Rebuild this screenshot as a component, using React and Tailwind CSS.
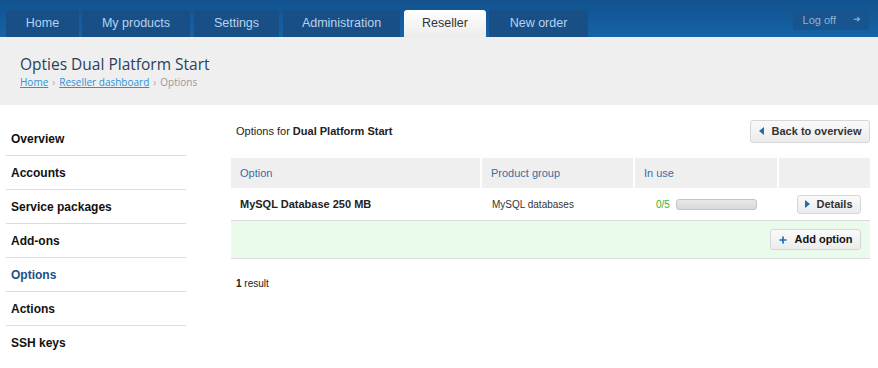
import { Plus } from 'lucide-react';

const tabs = [
  { label: 'Home', cls: 'w-[73px]' },
  { label: 'My products', cls: 'w-[108px] ml-[3px]' },
  { label: 'Settings', cls: 'w-[85px] ml-[4px]' },
  { label: 'Administration', cls: 'w-[117px] ml-[4px]' },
  { label: 'Reseller', cls: 'w-[82px] ml-[4px]', active: true },
  { label: 'New order', cls: 'w-[99px] ml-[3px]' },
];

const menu = ['Overview', 'Accounts', 'Service packages', 'Add-ons', 'Options', 'Actions', 'SSH keys'];

function Caret({ dir = 'right' }) {
  return (
    <svg width="5" height="8" viewBox="0 0 5 8" className="shrink-0">
      {dir === 'right' ? <path d="M0 0 L5 4 L0 8 Z" fill="#1a6fb5" /> : <path d="M5 0 L0 4 L5 8 Z" fill="#1a6fb5" />}
    </svg>
  );
}

export default function App() {
  return (
    <div className="w-[878px] h-[368px] bg-white overflow-hidden font-['Liberation_Sans',Arial,sans-serif] text-[11px] text-[#222]">
      {/* top nav */}
      <div className="h-[37px] bg-gradient-to-b from-[#12528f] to-[#1663a6] flex items-end pl-[6px] pr-[9px]">
        <div className="flex">
          {tabs.map((t) => (
            <div
              key={t.label}
              className={`${t.cls} h-[27px] rounded-t-[3px] flex items-center justify-center text-[12.5px] ${
                t.active ? 'bg-gradient-to-b from-white to-[#ececec] text-[#333]' : 'bg-[#174f86] text-[#b9d3ee]'
              }`}
            >
              {t.label}
            </div>
          ))}
        </div>
        <div className="ml-auto mb-[7px] w-[76px] h-[20px] rounded-[3px] bg-[#18548d] flex items-center justify-end pr-[8px] gap-[17px] text-[11px] text-[#8fb3d9]">
          <span>Log off</span>
          <span className="text-[9px]">➜</span>
        </div>
      </div>

      {/* page header */}
      <div className="h-[68px] bg-[#efefef] pl-[20px] pt-[16px]">
        <div className="font-['Open_Sans',sans-serif] text-[15.5px] leading-[22px] text-[#2a3f5a]">Opties Dual Platform Start</div>
        <div className="flex items-center gap-[4px] text-[10px] font-['Open_Sans',sans-serif]">
          <span className="text-[#2b93d6] underline">Home</span>
          <span className="text-[#aaa]">›</span>
          <span className="text-[#2b93d6] underline">Reseller dashboard</span>
          <span className="text-[#aaa]">›</span>
          <span className="text-[#999]">Options</span>
        </div>
      </div>

      <div className="flex pt-[17px]">
        {/* sidebar */}
        <div className="w-[180px] ml-[6px] shrink-0">
          {menu.map((m, i) => (
            <div
              key={m}
              className={`h-[34px] flex items-center pl-[5px] font-bold text-[12px] ${
                i < menu.length - 1 ? 'border-b border-[#dcdcdc]' : ''
              } ${m === 'Options' ? 'text-[#1d4f86]' : 'text-[#111]'}`}
            >
              {m}
            </div>
          ))}
        </div>

        {/* content */}
        <div className="ml-[45px] w-[639px]">
          <div className="flex items-center justify-between h-[24px] -mt-[3px]">
            <div className="pl-[5px]">
              Options for <span className="font-bold">Dual Platform Start</span>
            </div>
            <div className="h-[23px] w-[120px] flex items-center justify-center gap-[8px] rounded-[3px] border border-[#d6d6d6] bg-gradient-to-b from-[#fafafa] to-[#ececec] font-bold text-[#333]">
              <Caret dir="left" />
              Back to overview
            </div>
          </div>

          <div className="mt-[15px]">
            <div className="flex h-[30px] bg-[#efefef] text-[#3a6ea5]">
              <div className="w-[251px] border-r-2 border-white flex items-center pl-[9px]">Option</div>
              <div className="w-[153px] border-r-2 border-white flex items-center pl-[9px]">Product group</div>
              <div className="w-[144px] border-r-2 border-white flex items-center pl-[9px]">In use</div>
              <div className="flex-1" />
            </div>
            <div className="flex h-[33px] items-center border-b border-[#dcdcdc]">
              <div className="w-[251px] pl-[9px] font-bold">MySQL Database 250 MB</div>
              <div className="w-[153px] pl-[10px] text-[10px] text-[#333]">MySQL databases</div>
              <div className="w-[144px] flex items-center gap-[6px] pl-[21px]">
                <span className="text-[10px] text-[#3cb02a]">0/5</span>
                <div className="w-[81px] h-[11px] rounded-[3px] border border-[#c4c4c4] bg-gradient-to-b from-[#e8e8e8] to-[#d8d8d8]" />
              </div>
              <div className="flex-1 flex justify-end pr-[9px]">
                <div className="h-[19px] w-[64px] flex items-center justify-center gap-[6px] rounded-[3px] border border-[#d6d6d6] bg-gradient-to-b from-[#fafafa] to-[#ececec] font-bold text-[#333]">
                  <Caret />
                  Details
                </div>
              </div>
            </div>
            <div className="h-[38px] bg-[#ebfbeb] border-b border-[#dcdcdc] flex items-center justify-end pr-[9px]">
              <div className="h-[21px] w-[91px] flex items-center justify-center gap-[6px] rounded-[3px] border border-[#d6d6d6] bg-gradient-to-b from-[#fafafa] to-[#ececec] font-bold text-[#111]">
                <Plus size={10} strokeWidth={4} className="text-[#1a6fb5]" />
                Add option
              </div>
            </div>
          </div>

          <div className="mt-[17px] pl-[5px] text-[10px]">
            <span className="font-bold">1</span> result
          </div>
        </div>
      </div>
    </div>
  );
}
